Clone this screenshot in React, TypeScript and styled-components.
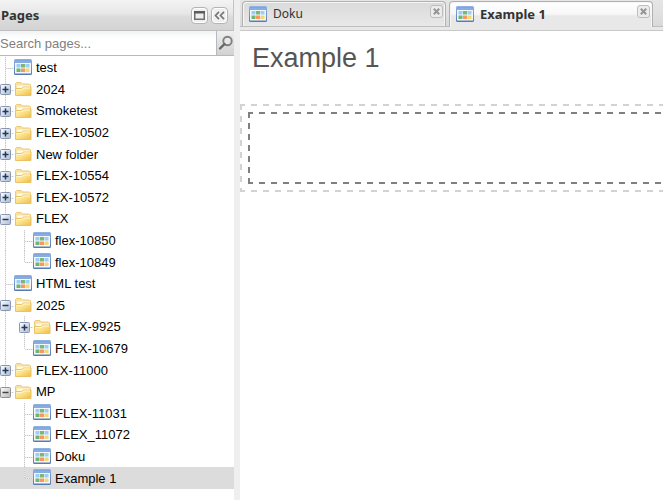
import React, { useState } from "react";
import styled, { createGlobalStyle, css } from "styled-components";

const GlobalStyle = createGlobalStyle`
  * { box-sizing: border-box; }
  html, body, #root { height: 100%; }
  body {
    margin: 0;
    background: #fff;
    color: #000;
    font-family: "Liberation Sans", Arial, sans-serif;
    font-size: 13px;
    overflow: hidden;
  }
  button, input { font: inherit; color: inherit; }
`;

const Layout = styled.div`
  display: flex;
  min-height: 100vh;
  background: #efefef;
`;

const Sidebar = styled.aside`
  flex: 0 0 234px;
  background: #fff;
`;

const PanelHeader = styled.header`
  display: flex;
  align-items: center;
  gap: 3px;
  height: 31px;
  padding: 0 5px 0 1px;
  background: linear-gradient(#f4f4f4, #e7e7e7 45%, #dcdcdc 55%, #d3d3d3);
  border-right: 1px solid #c4c4c4;
  border-bottom: 1px solid #bfbfbf;
`;

const PanelTitle = styled.h2`
  flex: 1;
  margin: 0;
  color: #333;
  font: bold 13px/18px "Noto Sans", "Open Sans", sans-serif;
`;

const ToolButton = styled.button`
  display: grid;
  place-items: center;
  width: 17px;
  height: 17px;
  padding: 0;
  border: 1px solid #b4b4b4;
  border-radius: 4px;
  background: #f0f0f0;
  box-shadow: inset 0 0 0 1px #fff;
`;

const SearchBar = styled.form`
  display: flex;
  height: 25px;
  border-bottom: 1px solid #b8b8bf;
`;

const SearchInput = styled.input`
  flex: 1;
  min-width: 0;
  padding: 0;
  border: 0;
  outline: 0;
  background: linear-gradient(#f1f3f3, #fff 8px);
  &::placeholder { color: #808080; opacity: 1; }
`;

const SearchButton = styled.button`
  display: grid;
  place-items: center;
  width: 18px;
  padding: 0;
  border: 0;
  border-left: 1px solid #b8b8bf;
  background: linear-gradient(#efefef, #d2d2d2);
`;

const Tree = styled.ul`
  display: grid;
  grid-auto-rows: 1fr;
  min-height: 432px;
  margin: 1px 0 0;
  padding: 0;
  list-style: none;
`;

const TreeRow = styled.li<{ $selected: boolean }>`
  display: flex;
  background: ${(p) => (p.$selected ? "#dcdcdc" : "transparent")};
`;

const dots = (angle: string) =>
  `repeating-linear-gradient(${angle}, #c9c9c9 0 1px, #eaeaea 1px 2px)`;

const Gutter = styled.span<{ $line: "none" | "full" | "end"; $branch: boolean }>`
  display: flex;
  flex: none;
  align-items: center;
  width: 19px;
  margin-left: -4px;
  margin-right: ${(p) => (p.$branch ? -1 : 4)}px;
  padding-left: 4px;
  ${(p) => {
    const layers: string[] = [];
    if (p.$line !== "none") {
      layers.push(`${dots("180deg")} 9px 0 / 1px ${p.$line === "end" ? "50%" : "100%"} no-repeat`);
    }
    if (p.$branch) {
      layers.push(`${dots("90deg")} 10px 11px / 8px 1px no-repeat`);
    }
    return layers.length ? css`background: ${layers.join(", ")};` : "";
  }}
`;

const Expander = styled.button`
  display: block;
  width: 11px;
  height: 11px;
  padding: 0;
  border: 0;
  background: none;
  margin-top: 1px;
`;

const NodeButton = styled.button`
  display: flex;
  flex: 1;
  align-items: center;
  gap: 4px;
  padding: 0;
  border: 0;
  background: none;
  text-align: left;
  white-space: nowrap;
`;

const NodeIcon = styled.span<{ $kind: "page" | "folder" }>`
  display: flex;
  align-items: ${(p) => (p.$kind === "page" ? "flex-start" : "center")};
  height: 18px;
`;

const Main = styled.main`
  flex: 1;
  min-width: 0;
  margin-left: 6px;
  overflow: hidden;
  background: #fff;
`;

const TabStrip = styled.div`
  display: flex;
  gap: 3px;
  height: 31px;
  padding: 1px 2px 0;
  border-bottom: 1px solid #c8c8c8;
  background: linear-gradient(#e6e6e6, #dadada 26px, #bebebe 26px, #bebebe 27px, #e8e8e8 27px);
`;

const Tab = styled.div<{ $active: boolean }>`
  display: flex;
  align-items: flex-start;
  flex: 0 1 204px;
  height: ${(p) => (p.$active ? 26 : 25)}px;
  padding: 3px 2px 0 6px;
  border: 1px solid #b0b0b0;
  border-bottom: 0;
  border-radius: 4px 4px 0 0;
  background: ${(p) =>
    p.$active
      ? "linear-gradient(#fff, #f7f7f7 12px, #e8e8e8 14px, #e8e8e8)"
      : "linear-gradient(#dadada, #e8e8e8)"};
  box-shadow: inset 1px 1px 0 #f6f6f6, inset -1px 0 0 #f6f6f6;
`;

const TabButton = styled.button<{ $active: boolean }>`
  display: flex;
  flex: 1;
  align-items: center;
  gap: 6px;
  min-width: 0;
  padding: 0;
  border: 0;
  background: none;
  color: #333;
  font: ${(p) => (p.$active ? "bold 13px" : "normal 12px")}/18px "Noto Sans", "Open Sans", sans-serif;
  white-space: nowrap;
`;

const CloseButton = styled.button`
  display: grid;
  place-items: center;
  width: 13px;
  height: 13px;
  padding: 0;
  border: 1px solid #bdbdbd;
  border-radius: 3px;
  background: #ececec;
`;

const PageTitle = styled.h1`
  margin: 11px 12px 29px;
  color: #555;
  font-size: 27px;
  font-weight: normal;
  line-height: 33px;
`;

const DropZone = styled.div<{ $color: string; $period: number }>`
  padding: 8px;
  ${(p) => {
    const h = `linear-gradient(90deg, ${p.$color} 6px, transparent 6px)`;
    const v = `linear-gradient(180deg, ${p.$color} 6px, transparent 6px)`;
    return css`
      background: ${h} -1px 0 / 12px 2px repeat-x,
        ${h} -1px 100% / 12px 2px repeat-x,
        ${v} 0 0 / 2px ${p.$period}px repeat-y;
    `;
  }}
`;

const ContentArea = styled.section`
  width: calc(100% + 24px);
`;

const DropSlot = styled(DropZone)`
  min-height: 72px;
`;

const PageIcon = () => (
  <svg width="18" height="16" viewBox="0 0 18 16" aria-hidden="true">
    <defs>
      <linearGradient id="page-frame" x1="0" y1="0" x2="0" y2="1">
        <stop offset="0" stopColor="#8fb3e4" />
        <stop offset="1" stopColor="#5679b0" />
      </linearGradient>
    </defs>
    <rect width="18" height="16" rx="1.5" fill="url(#page-frame)" />
    <path d="M1 1.5h16" stroke="#7ea5dd" />
    <path d="M1 3h16" stroke="#8db1e4" />
    <rect x="1" y="4" width="16" height="10.500" fill="#f3f7fc" />
    <rect x="2.500" y="5" width="4" height="3.500" fill="#9bcdf6" />
    <rect x="7" y="5" width="4" height="3.500" fill="#78ba72" />
    <rect x="11.500" y="5" width="4" height="3.500" fill="#9bcff7" />
    <rect x="2.500" y="9.500" width="4" height="3.500" fill="#70b66c" />
    <rect x="7" y="9.500" width="4" height="3.500" fill="#fb9563" />
    <rect x="11.500" y="9.500" width="4" height="3.500" fill="#f5d76c" />
  </svg>
);

const FolderIcon = () => (
  <svg width="18" height="16" viewBox="0 0 18 16" aria-hidden="true">
    <defs>
      <linearGradient id="folder-front" x1="0" y1="0" x2="1" y2="1">
        <stop offset="0" stopColor="#fff3bd" />
        <stop offset="0.5" stopColor="#fbdf83" />
        <stop offset="1" stopColor="#eebb45" />
      </linearGradient>
    </defs>
    <path d="M1.500 13.500v-11l1-1h4.500l1.500 1.500h7l1 1v9.500z" fill="#f9e2a0" stroke="#ecca7c" />
    <path d="M3 4.500h13v3h-13z" fill="#fffbea" />
    <path d="M1.500 7.500h6l2-1.500h7.500v8.500h-15.500z" fill="url(#folder-front)" stroke="#ebc266" />
    <path d="M2.500 8.500h5.500l2-1.500h6" fill="none" stroke="#fff6d2" />
  </svg>
);

const ExpanderIcon = ({ open, muted }: { open: boolean; muted?: boolean }) => (
  <svg width="11" height="11" viewBox="0 0 11 11" display="block" aria-hidden="true">
    <defs>
      <linearGradient id={muted ? "box-muted" : "box-blue"} x1="0" y1="0" x2="1" y2="1">
        <stop offset="0" stopColor="#fff" />
        <stop offset="1" stopColor={muted ? "#b5b5b5" : "#aab9d3"} />
      </linearGradient>
    </defs>
    <rect
      x=".5"
      y=".5"
      width="10"
      height="10"
      rx="1"
      fill={`url(#${muted ? "box-muted" : "box-blue"})`}
      stroke={muted ? "#909090" : "#8796b2"}
    />
    <path
      d={open ? "M2.500 5.500h6" : "M2.500 5.500h6M5.500 2.500v6"}
      stroke={muted ? "#444" : "#223759"}
      strokeWidth="1.500"
    />
  </svg>
);

const MaximizeIcon = () => (
  <svg width="11" height="9" viewBox="0 0 11 9" aria-hidden="true">
    <rect x=".75" y=".75" width="9.500" height="7.500" fill="#eee" stroke="#707070" strokeWidth="1.500" />
    <path d="M0 1.250h11" stroke="#5c5c5c" strokeWidth="2.500" />
  </svg>
);

const CollapseIcon = () => (
  <svg width="11" height="9" viewBox="0 0 11 9" aria-hidden="true">
    <path d="M5 .8 1.500 4.500 5 8.200M10 .8 6.500 4.500 10 8.200" fill="none" stroke="#777" strokeWidth="1.700" />
  </svg>
);

const SearchIcon = () => (
  <svg width="16" height="16" viewBox="0 0 16 16" aria-hidden="true">
    <circle cx="9.500" cy="6" r="4.200" fill="#e8e8e8" stroke="#808080" strokeWidth="1.900" />
    <path d="m6.500 9-4.500 4.500" stroke="#666" strokeWidth="2.400" strokeLinecap="round" />
  </svg>
);

const CloseIcon = () => (
  <svg width="7" height="7" viewBox="0 0 7 7" aria-hidden="true">
    <path d="m.8.8 5.400 5.400m0-5.400L.8 6.200" stroke="#959595" strokeWidth="2" />
  </svg>
);

type TreeNode = {
  label: string;
  level: 1 | 2;
  kind: "page" | "folder";
  open?: boolean;
  last?: boolean;
  underLast?: boolean;
};

const nodes: TreeNode[] = [
  { label: "test", level: 1, kind: "page" },
  { label: "2024", level: 1, kind: "folder" },
  { label: "Smoketest", level: 1, kind: "folder" },
  { label: "FLEX-10502", level: 1, kind: "folder" },
  { label: "New folder", level: 1, kind: "folder" },
  { label: "FLEX-10554", level: 1, kind: "folder" },
  { label: "FLEX-10572", level: 1, kind: "folder" },
  { label: "FLEX", level: 1, kind: "folder", open: true },
  { label: "flex-10850", level: 2, kind: "page" },
  { label: "flex-10849", level: 2, kind: "page", last: true },
  { label: "HTML test", level: 1, kind: "page" },
  { label: "2025", level: 1, kind: "folder", open: true },
  { label: "FLEX-9925", level: 2, kind: "folder" },
  { label: "FLEX-10679", level: 2, kind: "page", last: true },
  { label: "FLEX-11000", level: 1, kind: "folder" },
  { label: "MP", level: 1, kind: "folder", open: true, last: true },
  { label: "FLEX-11031", level: 2, kind: "page", underLast: true },
  { label: "FLEX_11072", level: 2, kind: "page", underLast: true },
  { label: "Doku", level: 2, kind: "page", underLast: true },
  { label: "Example 1", level: 2, kind: "page", last: true, underLast: true },
];

const tabs = ["Doku", "Example 1"];

export default function App() {
  const [current, setCurrent] = useState("Example 1");

  return (
    <>
      <GlobalStyle />
      <Layout>
        <Sidebar>
          <PanelHeader>
            <PanelTitle>Pages</PanelTitle>
            <ToolButton type="button" aria-label="Maximize"><MaximizeIcon /></ToolButton>
            <ToolButton type="button" aria-label="Collapse panel"><CollapseIcon /></ToolButton>
          </PanelHeader>
          <SearchBar role="search" onSubmit={(e) => e.preventDefault()}>
            <SearchInput type="text" aria-label="Search pages" placeholder="Search pages..." />
            <SearchButton type="submit" aria-label="Search"><SearchIcon /></SearchButton>
          </SearchBar>
          <Tree>
            {nodes.map((node) => (
              <TreeRow key={node.label + node.level} $selected={node.label === current}>
                {node.level === 2 && (
                  <Gutter $line={node.underLast ? "none" : "full"} $branch={false} />
                )}
                <Gutter $line={node.last ? "end" : "full"} $branch>
                  {node.kind === "folder" && (
                    <Expander
                      type="button"
                      aria-expanded={!!node.open}
                      aria-label={`Toggle ${node.label}`}
                    >
                      <ExpanderIcon open={!!node.open} muted={node.label === "MP"} />
                    </Expander>
                  )}
                </Gutter>
                <NodeButton type="button" onClick={() => setCurrent(node.label)}>
                  <NodeIcon $kind={node.kind}>
                    {node.kind === "page" ? <PageIcon /> : <FolderIcon />}
                  </NodeIcon>
                  {node.label}
                </NodeButton>
              </TreeRow>
            ))}
          </Tree>
        </Sidebar>
        <Main>
          <TabStrip role="tablist">
            {tabs.map((name) => (
              <Tab key={name} $active={name === current}>
                <TabButton
                  type="button"
                  role="tab"
                  aria-selected={name === current}
                  $active={name === current}
                  onClick={() => setCurrent(name)}
                >
                  <PageIcon />
                  {name}
                </TabButton>
                <CloseButton type="button" aria-label={`Close ${name}`}><CloseIcon /></CloseButton>
              </Tab>
            ))}
          </TabStrip>
          <PageTitle>Example 1</PageTitle>
          <ContentArea>
            <DropZone $color="#d3d3d3" $period={12}>
              <DropSlot $color="#808080" $period={11} />
            </DropZone>
          </ContentArea>
        </Main>
      </Layout>
    </>
  );
}
